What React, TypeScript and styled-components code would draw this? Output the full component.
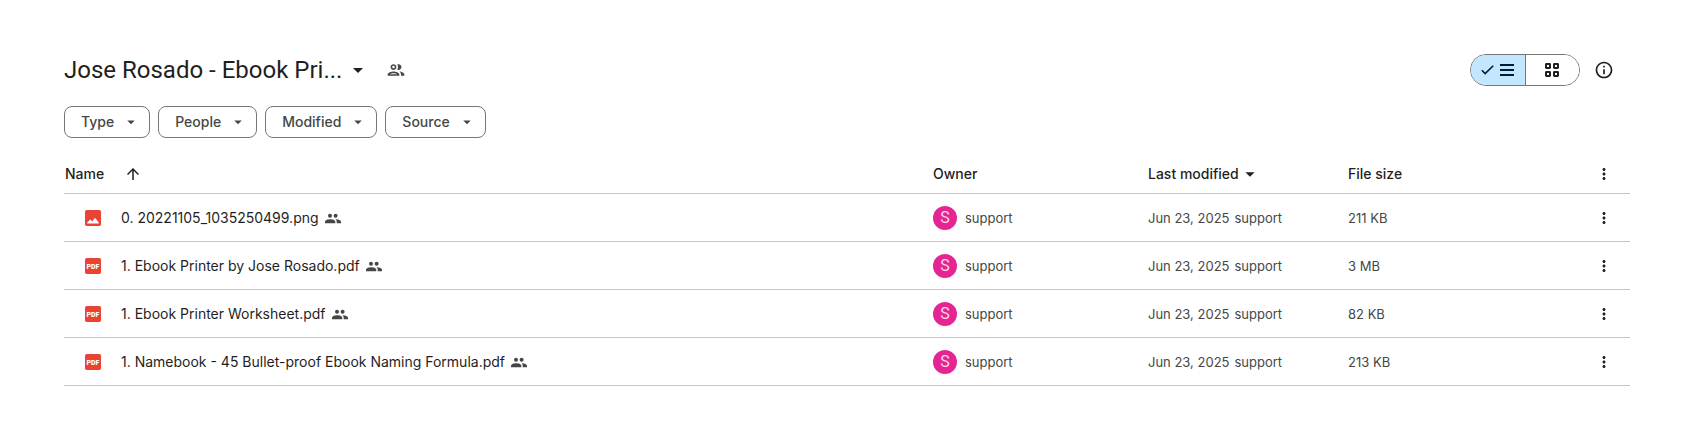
import React from "react";
import styled, { createGlobalStyle } from "styled-components";

const GlobalStyle = createGlobalStyle`
  *, *::before, *::after { box-sizing: border-box; }
  body {
    margin: 0;
    background: #fff;
    color: #1f1f1f;
    font: 14px/20px Inter, Roboto, sans-serif;
  }
  button { font: inherit; color: inherit; background: none; border: 0; padding: 0; cursor: pointer; }
  svg { display: block; flex: none; fill: currentColor; }
`;

const Page = styled.main`
  padding: 54px 60px 40px 64px;
`;

const Toolbar = styled.header`
  display: flex;
  align-items: center;
  justify-content: space-between;
  padding-right: 16px;
`;

const Group = styled.div<{ $gap: number }>`
  display: flex;
  align-items: center;
  gap: ${(p) => p.$gap}px;
`;

const Heading = styled.h1`
  margin: 0;
  font: 400 24px/32px Roboto, sans-serif;
`;

const TitleButton = styled.button`
  display: flex;
  align-items: center;
  gap: 4px;
`;

const IconButton = styled.button<{ $muted?: boolean }>`
  display: flex;
  align-items: center;
  justify-content: center;
  color: ${(p) => (p.$muted ? "#444746" : "#1f1f1f")};
`;

const ViewToggle = styled.div`
  display: flex;
  width: 110px;
  height: 32px;
  overflow: hidden;
  border: 1px solid #747775;
  border-radius: 16px;
`;

const Segment = styled.button<{ $active?: boolean }>`
  flex: 1;
  display: flex;
  align-items: center;
  justify-content: center;
  gap: 6px;
  color: ${(p) => (p.$active ? "#001d35" : "#1f1f1f")};
  background: ${(p) => (p.$active ? "#c2e7ff" : "#fff")};
  & + & { border-left: 1px solid #747775; }
`;

const Filters = styled.div`
  display: flex;
  gap: 8px;
  margin: 20px 0 16px;
`;

const Chip = styled.button`
  display: flex;
  align-items: center;
  gap: 8px;
  height: 32px;
  padding: 0 9px 0 16px;
  border: 1px solid #747775;
  border-radius: 8px;
  color: #444746;
  font-weight: 450;
`;

const Table = styled.table`
  width: 100%;
  table-layout: fixed;
  border-collapse: separate;
  border-spacing: 0;
`;

const Col = styled.col<{ $w?: number }>`
  width: ${(p) => (p.$w ? `${p.$w}px` : "auto")};
`;

const HeadCell = styled.th`
  height: 40px;
  padding: 0;
  border-bottom: 1px solid #c4c7c5;
  text-align: left;
  font-weight: 450;
  &:first-child { padding-left: 1px; }
`;

const SortButton = styled.button<{ $gap: number }>`
  display: flex;
  align-items: center;
  gap: ${(p) => p.$gap}px;
  height: 20px;
`;

const Cell = styled.td`
  height: 48px;
  padding: 0;
  border-bottom: 1px solid #c4c7c5;
  color: #444746;
  font-size: 13px;
  white-space: nowrap;
`;

const MenuBox = styled.div`
  display: flex;
  justify-content: flex-end;
  padding-right: 17px;
`;

const FileName = styled.div`
  display: flex;
  align-items: center;
  padding-left: 21px;
  gap: 20px;
`;

const FileLabel = styled.span`
  display: flex;
  align-items: center;
  gap: 6px;
  color: #1f1f1f;
  font-size: 14px;
  svg { color: #444746; }
`;

const Avatar = styled.span`
  width: 24px;
  height: 24px;
  border-radius: 50%;
  background: #e52592;
  color: #fcd3ea;
  font: 400 16px/24px Roboto, sans-serif;
  text-align: center;
`;

const Modified = styled.span`
  display: flex;
  gap: 5px;
`;

const PdfText = styled.text`
  fill: #fff;
  font: 900 7px Roboto, sans-serif;
`;

const Icon = ({ d, size }: { d: string; size: number }) => (
  <svg width={size} height={size} viewBox="0 0 24 24" aria-hidden="true">
    <path d={d} />
  </svg>
);

const CARET = "M7 10l5 5 5-5z";
const ARROW_UP = "M4 12l1.41 1.41L11 7.83V20h2V7.83l5.58 5.59L20 12l-8-8-8 8z";
const MORE =
  "M12 8c1.1 0 2-.9 2-2s-.9-2-2-2-2 .9-2 2 .9 2 2 2zm0 2c-1.1 0-2 .9-2 2s.9 2 2 2 2-.9 2-2-.9-2-2-2zm0 6c-1.1 0-2 .9-2 2s.9 2 2 2 2-.9 2-2-.9-2-2-2z";
const INFO =
  "M11 7h2v2h-2zm0 4h2v6h-2zm1-9C6.48 2 2 6.48 2 12s4.48 10 10 10 10-4.48 10-10S17.52 2 12 2zm0 18c-4.41 0-8-3.59-8-8s3.59-8 8-8 8 3.59 8 8-3.59 8-8 8z";
const PEOPLE =
  "M9 13.75c-2.34 0-7 1.17-7 3.5V19h14v-1.75c0-2.33-4.66-3.5-7-3.5zM4.34 17c.84-.58 2.87-1.25 4.66-1.25s3.82.67 4.66 1.25H4.34zM9 12c1.93 0 3.5-1.57 3.5-3.5S10.93 5 9 5 5.5 6.57 5.5 8.5 7.07 12 9 12zm0-5c.83 0 1.5.67 1.5 1.5S9.83 10 9 10s-1.5-.67-1.5-1.5S8.17 7 9 7zm7.04 6.81c1.16.84 1.96 1.96 1.96 3.44V19h4v-1.75c0-2.02-3.5-3.17-5.96-3.44zM15 12c1.93 0 3.5-1.57 3.5-3.5S16.93 5 15 5c-.54 0-1.04.13-1.5.35.63.89 1 1.98 1 3.15s-.37 2.26-1 3.15c.46.22.96.35 1.5.35z";

const SharedIcon = () => (
  <svg width="16" height="16" viewBox="0 0 16 16" role="img" aria-label="Shared">
    <circle cx="5" cy="5.7" r="2" />
    <circle cx="10.6" cy="5.7" r="2" />
    <path d="M0 13.3v-1.5C0 9.9 3 9.2 5.2 9.2s5.1.7 5.1 2.6v1.5z" />
    <path d="M10.4 9.2c2.5 0 5.6.8 5.6 2.6v1.5h-4.3v-1.5c0-1.1-.5-2-1.3-2.6z" />
  </svg>
);

const FileIcon = ({ kind }: { kind: "image" | "pdf" }) => (
  <svg width="16" height="16" viewBox="0 0 16 16" aria-hidden="true">
    <rect width="16" height="16" rx="1.8" fill="#ea4335" />
    {kind === "pdf" ? (
      <PdfText x="8" y="10.5" textAnchor="middle">PDF</PdfText>
    ) : (
      <path d="M2.2 13.5V12.6L5.4 9.6 7.2 11.4 10 7.8 13.7 12.6V13.5z" fill="#fff" />
    )}
  </svg>
);

const CheckIcon = () => (
  <svg width="13" height="10" viewBox="0 0 13 10" aria-hidden="true">
    <path d="M.8 5.2l3.4 3.4L12.2.8" fill="none" stroke="currentColor" strokeWidth="1.6" />
  </svg>
);

const ListIcon = () => (
  <svg width="14" height="14" viewBox="0 0 14 14" aria-hidden="true">
    <path d="M0 1h14v2H0zM0 6h14v2H0zM0 11h14v2H0z" />
  </svg>
);

const GridIcon = () => (
  <svg width="14" height="14" viewBox="0 0 14 14" aria-hidden="true">
    <g fill="none" stroke="currentColor" strokeWidth="2">
      <rect x="1" y="1" width="4" height="4" rx=".4" />
      <rect x="9" y="1" width="4" height="4" rx=".4" />
      <rect x="1" y="9" width="4" height="4" rx=".4" />
      <rect x="9" y="9" width="4" height="4" rx=".4" />
    </g>
  </svg>
);

const MoreMenu = ({ label }: { label: string }) => (
  <MenuBox>
    <IconButton aria-label={label}>
      <Icon d={MORE} size={18} />
    </IconButton>
  </MenuBox>
);

type File = { name: string; kind: "image" | "pdf"; size: string };

const files: File[] = [
  { name: "0. 20221105_1035250499.png", kind: "image", size: "211 KB" },
  { name: "1. Ebook Printer by Jose Rosado.pdf", kind: "pdf", size: "3 MB" },
  { name: "1. Ebook Printer Worksheet.pdf", kind: "pdf", size: "82 KB" },
  { name: "1. Namebook - 45 Bullet-proof Ebook Naming Formula.pdf", kind: "pdf", size: "213 KB" },
];

export default function App() {
  return (
    <Page>
      <GlobalStyle />
      <Toolbar>
        <Group $gap={16}>
          <TitleButton aria-haspopup="menu">
            <Heading>Jose Rosado - Ebook Pri...</Heading>
            <Icon d={CARET} size={24} />
          </TitleButton>
          <IconButton $muted aria-label="Manage access">
            <Icon d={PEOPLE} size={20} />
          </IconButton>
        </Group>
        <Group $gap={14}>
          <ViewToggle role="group" aria-label="View">
            <Segment $active aria-pressed="true" aria-label="List view">
              <CheckIcon />
              <ListIcon />
            </Segment>
            <Segment aria-pressed="false" aria-label="Grid view">
              <GridIcon />
            </Segment>
          </ViewToggle>
          <IconButton aria-label="View details">
            <Icon d={INFO} size={20} />
          </IconButton>
        </Group>
      </Toolbar>

      <Filters>
        {["Type", "People", "Modified", "Source"].map((label) => (
          <Chip key={label} aria-haspopup="menu">
            {label}
            <Icon d={CARET} size={18} />
          </Chip>
        ))}
      </Filters>

      <Table>
        <colgroup>
          <Col />
          <Col $w={215} />
          <Col $w={200} />
          <Col $w={200} />
          <Col $w={82} />
        </colgroup>
        <thead>
          <tr>
            <HeadCell scope="col" aria-sort="ascending">
              <SortButton $gap={20}>
                Name
                <Icon d={ARROW_UP} size={18} />
              </SortButton>
            </HeadCell>
            <HeadCell scope="col">Owner</HeadCell>
            <HeadCell scope="col">
              <SortButton $gap={0}>
                Last modified
                <Icon d={CARET} size={22} />
              </SortButton>
            </HeadCell>
            <HeadCell scope="col">File size</HeadCell>
            <HeadCell scope="col">
              <MoreMenu label="More sort options" />
            </HeadCell>
          </tr>
        </thead>
        <tbody>
          {files.map((file) => (
            <tr key={file.name}>
              <Cell>
                <FileName>
                  <FileIcon kind={file.kind} />
                  <FileLabel>
                    {file.name}
                    <SharedIcon />
                  </FileLabel>
                </FileName>
              </Cell>
              <Cell>
                <Group $gap={8}>
                  <Avatar aria-hidden="true">S</Avatar>
                  support
                </Group>
              </Cell>
              <Cell>
                <Modified>
                  <span>Jun 23, 2025</span>
                  <span>support</span>
                </Modified>
              </Cell>
              <Cell>{file.size}</Cell>
              <Cell>
                <MoreMenu label={`More actions for ${file.name}`} />
              </Cell>
            </tr>
          ))}
        </tbody>
      </Table>
    </Page>
  );
}
